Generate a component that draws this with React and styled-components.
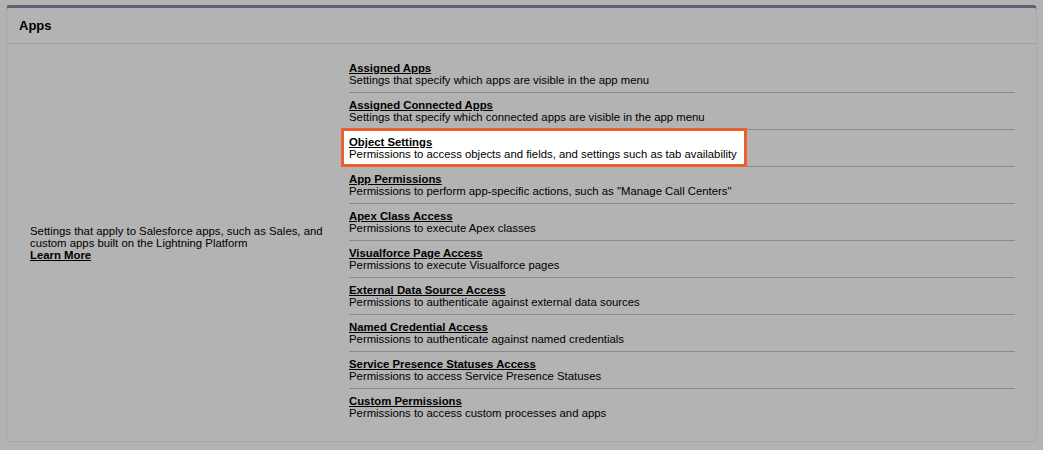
import React from 'react';
import styled, { createGlobalStyle } from 'styled-components';

const GlobalStyle = createGlobalStyle`
  html, body {
    margin: 0;
    padding: 0;
    background: #b3b3b3;
    font-family: Arial, "Liberation Sans", sans-serif;
    color: #000;
  }
`;

const Page = styled.div`
  padding: 5px 6px 8px 6px;
`;

const Panel = styled.div`
  border: 1px solid #a8a8a8;
  border-top: 3px solid #5b6072;
  border-radius: 4px;
  background: #b3b3b3;
`;

const PanelHeader = styled.div`
  height: 35px;
  padding: 0 12px;
  display: flex;
  align-items: center;
  font-size: 13px;
  font-weight: bold;
  border-bottom: 1px solid #a0a0a0;
`;

const PanelBody = styled.div`
  display: flex;
  align-items: center;
  padding: 12px 21px 15px 23px;
`;

const Intro = styled.div`
  width: 319px;
  flex: none;
  margin-top: 4px;
  font-size: 11.35px;
  line-height: 12px;
`;

const LearnMore = styled.a`
  font-weight: bold;
  color: #000;
  text-decoration: underline;
`;

const List = styled.div`
  flex: 1;
`;

const Row = styled.div`
  padding: 6px 0 6px;
  border-bottom: 1px solid ${(p) => (p.$last ? 'transparent' : '#8a8a8a')};
  font-size: 11.35px;
  line-height: 12px;
`;

const RowContent = styled.div`
  position: relative;
  display: inline-block;
  z-index: 0;

  ${(p) =>
    p.$highlight &&
    `
    &::before {
      content: '';
      position: absolute;
      left: -8px;
      right: -10px;
      top: -8px;
      bottom: -7px;
      background: #fff;
      border: 3px solid #e9602c;
      z-index: -1;
    }
  `}
`;

const Title = styled.a`
  display: block;
  font-weight: bold;
  color: #000;
  text-decoration: underline;
`;

const Desc = styled.div``;

const items = [
  ['Assigned Apps', 'Settings that specify which apps are visible in the app menu'],
  ['Assigned Connected Apps', 'Settings that specify which connected apps are visible in the app menu'],
  ['Object Settings', 'Permissions to access objects and fields, and settings such as tab availability', true],
  ['App Permissions', 'Permissions to perform app-specific actions, such as "Manage Call Centers"'],
  ['Apex Class Access', 'Permissions to execute Apex classes'],
  ['Visualforce Page Access', 'Permissions to execute Visualforce pages'],
  ['External Data Source Access', 'Permissions to authenticate against external data sources'],
  ['Named Credential Access', 'Permissions to authenticate against named credentials'],
  ['Service Presence Statuses Access', 'Permissions to access Service Presence Statuses'],
  ['Custom Permissions', 'Permissions to access custom processes and apps'],
];

export default function App() {
  return (
    <>
      <GlobalStyle />
      <Page>
        <Panel>
          <PanelHeader>Apps</PanelHeader>
          <PanelBody>
            <Intro>
              Settings that apply to Salesforce apps, such as Sales, and custom apps built on the Lightning Platform
              <br />
              <LearnMore href="#">Learn More</LearnMore>
            </Intro>
            <List>
              {items.map(([title, desc, hl], i) => (
                <Row key={title} $last={i === items.length - 1}>
                  <RowContent $highlight={hl}>
                    <Title href="#">{title}</Title>
                    <Desc>{desc}</Desc>
                  </RowContent>
                </Row>
              ))}
            </List>
          </PanelBody>
        </Panel>
      </Page>
    </>
  );
}
